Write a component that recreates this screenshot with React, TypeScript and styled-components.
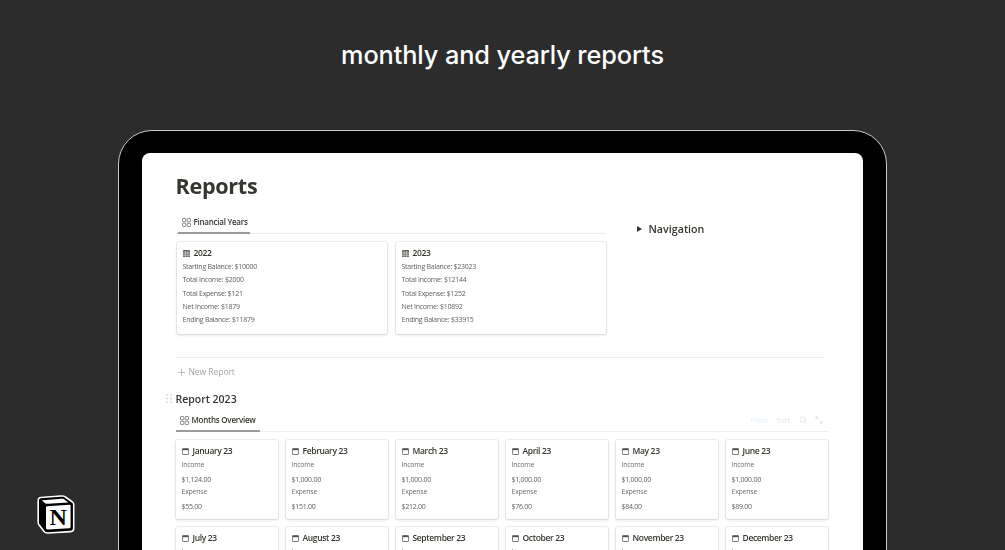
import React from "react";
import styled, { createGlobalStyle } from "styled-components";
import { Search } from "lucide-react";

const Global = createGlobalStyle`
  html, body { margin: 0; padding: 0; background: #2c2c2c; }
  body { width: 1005px; height: 550px; overflow: hidden; font-family: "Open Sans", "Liberation Sans", sans-serif; }
`;

const Stage = styled.div`
  position: relative;
  width: 1005px;
  height: 550px;
  overflow: hidden;
  background: #2c2c2c;
  display: flex;
  flex-direction: column;
  align-items: center;
`;

const Headline = styled.h1`
  margin: 37px 0 0;
  height: 36px;
  font: 500 25.3px/36px Inter, "Open Sans", sans-serif;
  color: #fff;
  letter-spacing: -0.1px;
  white-space: nowrap;
`;

const Device = styled.div`
  box-sizing: border-box;
  flex: none;
  width: 769px;
  height: 600px;
  margin-top: 57px;
  padding: 22px 23px 0 22.5px;
  background: #000;
  border: 1.5px solid #c9c9c9;
  border-radius: 34px;
`;

const Screen = styled.div`
  box-sizing: border-box;
  height: 100%;
  padding: 20px 35px 0 34px;
  background: #fff;
  border-radius: 8px;
  color: #37352f;
  filter: blur(0.35px);
`;

const PageTitle = styled.div`
  font: 700 21.6px/26px "Open Sans", sans-serif;
  letter-spacing: -0.3px;
  color: #37352f;
  height: 26px;
`;

const TopGrid = styled.div`
  display: flex;
  margin-top: 14px;
`;

const LeftCol = styled.div`
  width: 430px;
  flex: none;
`;

const Nav = styled.div`
  margin: 9px 0 0 31px;
  display: flex;
  align-items: center;
  height: 14px;
  gap: 7px;
  font: 600 10.7px/14px "Open Sans", sans-serif;
  color: #37352f;
`;

const Tri = styled.span`
  width: 0;
  height: 0;
  border-left: 5px solid #37352f;
  border-top: 3px solid transparent;
  border-bottom: 3px solid transparent;
`;

const TabBar = styled.div<{ $wide?: boolean }>`
  display: flex;
  align-items: center;
  justify-content: space-between;
  height: 21px;
  border-bottom: 1px solid #eeeeec;
  box-sizing: border-box;
  ${(p) => (p.$wide ? "width: 652px;" : "")}
`;

const Tab = styled.div<{ $w: number; $pad: number }>`
  box-sizing: border-box;
  width: ${(p) => p.$w}px;
  margin-left: ${(p) => p.$pad}px;
  height: 21px;
  margin-bottom: -1px;
  display: flex;
  align-items: center;
  gap: 3px;
  padding: 0 0 1px 4px;
  border-bottom: 2px solid #9b9a97;
  font: 600 8px/12px "Open Sans", sans-serif;
  letter-spacing: -0.25px;
  color: #37352f;
  white-space: nowrap;
`;

const YearCards = styled.div`
  display: flex;
  gap: 9px;
  margin: 8px 0 0 1px;
`;

const cardSkin = `
  box-sizing: border-box;
  background: #fff;
  border-radius: 2px;
  box-shadow: 0 0 0 1px rgba(15,15,15,.06), 0 1px 3px rgba(15,15,15,.14);
`;

const YearCard = styled.div`
  ${cardSkin}
  width: 210px;
  height: 92px;
  padding: 5px 6px 0;
`;

const CardTitle = styled.div`
  display: flex;
  align-items: center;
  gap: 4px;
  height: 12px;
  font: 600 8.5px/12px "Open Sans", sans-serif;
  letter-spacing: -0.35px;
  color: #37352f;
  white-space: nowrap;
`;

const YearLines = styled.div`
  margin-top: 1px;
`;

const Line = styled.div`
  font: 400 7px/13.3px "Open Sans", sans-serif;
  letter-spacing: -0.25px;
  color: #62615c;
  white-space: nowrap;
`;

const Divider = styled.div`
  height: 1px;
  margin-top: 23px;
  background: #eeeeec;
  width: 648px;
`;

const NewReport = styled.div`
  display: flex;
  align-items: center;
  gap: 4px;
  margin: 7px 0 0 2px;
  height: 14px;
  font: 400 8.6px/14px "Open Sans", sans-serif;
  letter-spacing: -0.1px;
  color: #a5a4a0;
`;

const SectionTitle = styled.div`
  position: relative;
  margin-top: 12px;
  height: 16px;
  font: 600 10.5px/16px "Open Sans", sans-serif;
  color: #37352f;
`;

const Handle = styled.svg`
  position: absolute;
  left: -10px;
  top: 3px;
`;

const Tools = styled.div`
  display: flex;
  align-items: center;
  gap: 8px;
  padding: 0 5px 2px 0;
  font: 400 7.5px/12px "Open Sans", sans-serif;
  color: #e6e6e4;
`;

const Filter = styled.span`
  color: #e3eef8;
`;

const MonthArea = styled.div`
  margin-top: 4px;
`;

const MonthGrid = styled.div`
  display: grid;
  grid-template-columns: repeat(6, 102.5px);
  column-gap: 7.5px;
  row-gap: 8px;
  margin-top: 8px;
`;

const MonthCard = styled.div`
  ${cardSkin}
  height: 79px;
  padding: 5px 6px 0;
`;

const MonthLines = styled.div`
  margin-top: 1.5px;
`;

const Label = styled.div`
  font: 400 7px/12px "Open Sans", sans-serif;
  letter-spacing: -0.25px;
  color: #72716c;
  margin-bottom: 3px;
`;

const Value = styled.div`
  font: 400 7px/12px "Open Sans", sans-serif;
  letter-spacing: -0.25px;
  color: #62615c;
`;

const Logo = styled.svg`
  position: absolute;
  left: 37px;
  top: 495px;
`;

const Gallery = () => (
  <svg width="9" height="9" viewBox="0 0 9 9" fill="none" stroke="#6f6e69" strokeWidth="0.8">
    <rect x="0.5" y="0.5" width="3.3" height="3.3" rx="0.6" />
    <rect x="5.2" y="0.5" width="3.3" height="3.3" rx="0.6" />
    <rect x="0.5" y="5.2" width="3.3" height="3.3" rx="0.6" />
    <rect x="5.2" y="5.2" width="3.3" height="3.3" rx="0.6" />
  </svg>
);

const TableIcon = () => (
  <svg width="7" height="7" viewBox="0 0 7 7">
    <rect width="7" height="7" rx="0.6" fill="#6a6964" />
    <path d="M0 2.2H7M0 3.8H7M0 5.4H7M2.3 1V7M4.7 1V7" stroke="#fff" strokeWidth="0.4" />
  </svg>
);

const CalIcon = () => (
  <svg width="7" height="7" viewBox="0 0 7 7" fill="none">
    <rect x="0.4" y="0.6" width="6.2" height="5.9" rx="0.7" stroke="#55534e" strokeWidth="0.8" />
    <rect x="0.4" y="0.6" width="6.2" height="1.6" fill="#55534e" />
  </svg>
);

const years = [
  { y: "2022", l: ["Starting Balance: $10000", "Total Income: $2000", "Total Expense: $121", "Net Income: $1879", "Ending Balance: $11879"] },
  { y: "2023", l: ["Starting Balance: $23023", "Total Income: $12144", "Total Expense: $1252", "Net Income: $10892", "Ending Balance: $33915"] },
];

const months = [
  ["January 23", "$1,124.00", "$55.00"],
  ["February 23", "$1,000.00", "$151.00"],
  ["March 23", "$1,000.00", "$212.00"],
  ["April 23", "$1,000.00", "$76.00"],
  ["May 23", "$1,000.00", "$84.00"],
  ["June 23", "$1,000.00", "$89.00"],
  ["July 23", "$1,000.00", "$0.00"],
  ["August 23", "$1,000.00", "$0.00"],
  ["September 23", "$1,000.00", "$0.00"],
  ["October 23", "$1,000.00", "$0.00"],
  ["November 23", "$1,000.00", "$0.00"],
  ["December 23", "$1,000.00", "$0.00"],
];

export default function App() {
  return (
    <Stage>
      <Global />
      <Headline>monthly and yearly reports</Headline>
      <Device>
        <Screen>
          <PageTitle>Reports</PageTitle>
          <TopGrid>
            <LeftCol>
              <TabBar>
                <Tab $w={72} $pad={2}><Gallery /> Financial Years</Tab>
              </TabBar>
              <YearCards>
                {years.map((c) => (
                  <YearCard key={c.y}>
                    <CardTitle><TableIcon /> {c.y}</CardTitle>
                    <YearLines>
                      {c.l.map((t) => <Line key={t}>{t}</Line>)}
                    </YearLines>
                  </YearCard>
                ))}
              </YearCards>
            </LeftCol>
            <Nav><Tri /> Navigation</Nav>
          </TopGrid>
          <Divider />
          <NewReport>
            <svg width="7" height="7" viewBox="0 0 7 7" stroke="#a5a4a0" strokeWidth="0.7"><path d="M3.5 0V7M0 3.5H7" /></svg>
            New Report
          </NewReport>
          <SectionTitle>
            <Handle width="6" height="9" viewBox="0 0 6 9" fill="#c4c4c1">
              <circle cx="1" cy="1" r="0.8" /><circle cx="5" cy="1" r="0.8" />
              <circle cx="1" cy="4.5" r="0.8" /><circle cx="5" cy="4.5" r="0.8" />
              <circle cx="1" cy="8" r="0.8" /><circle cx="5" cy="8" r="0.8" />
            </Handle>
            Report 2023
          </SectionTitle>
          <MonthArea>
            <TabBar $wide>
              <Tab $w={84} $pad={0}><Gallery /> Months Overview</Tab>
              <Tools>
                <Filter>Filter</Filter>
                <span>Sort</span>
                <Search size={8} color="#d9d9d7" strokeWidth={2} />
                <svg width="8" height="8" viewBox="0 0 8 8" fill="none" stroke="#d9d9d7" strokeWidth="0.9">
                  <path d="M1 1L3 3M1 1V3M1 1H3M7 7L5 5M7 7V5M7 7H5" />
                </svg>
              </Tools>
            </TabBar>
            <MonthGrid>
              {months.map(([name, inc, exp]) => (
                <MonthCard key={name}>
                  <CardTitle><CalIcon /> {name}</CardTitle>
                  <MonthLines>
                    <Label>Income</Label>
                    <Value>{inc}</Value>
                    <Label>Expense</Label>
                    <Value>{exp}</Value>
                  </MonthLines>
                </MonthCard>
              ))}
            </MonthGrid>
          </MonthArea>
        </Screen>
      </Device>
      <Logo width="38" height="39" viewBox="-5 -5 106 110" aria-label="Notion">
        <path d="M6.017 4.313l55.333-4.087c6.797-.583 8.543-.19 12.817 2.917l17.663 12.443c2.913 2.14 3.883 2.723 3.883 5.053v68.243c0 4.277-1.553 6.807-6.99 7.193L24.467 99.967c-4.08.193-6.023-.39-8.16-3.113L3.3 79.94C.967 76.827 0 74.497 0 71.773V11.113c0-3.497 1.553-6.413 6.017-6.8z" fill="#fff" stroke="#fff" strokeWidth="9" strokeLinejoin="round" />
        <path d="M61.35.227L6.017 4.314C1.553 4.7 0 7.617 0 11.113v60.66c0 2.723.967 5.053 3.3 8.167l13.007 16.913c2.137 2.723 4.08 3.307 8.16 3.113l64.257-3.89c5.433-.387 6.99-2.917 6.99-7.193V20.64c0-2.21-.873-2.847-3.443-4.733L74.167 3.143c-4.273-3.107-6.02-3.5-12.817-2.917zM25.92 19.523c-5.247.353-6.437.433-9.417-1.99L8.927 11.507c-.77-.78-.383-1.753 1.557-1.947l53.193-3.887c4.467-.39 6.793 1.167 8.54 2.527l9.123 6.61c.39.197 1.36 1.36.193 1.36l-54.933 3.307-.68.047zM19.803 88.3V30.367c0-2.53.777-3.697 3.103-3.893L86 22.78c2.14-.193 3.107 1.167 3.107 3.693v57.547c0 2.53-.39 4.67-3.883 4.863l-60.377 3.5c-3.493.193-5.043-.97-5.043-4.083z" fill="#000" fillRule="evenodd" />
        <text x="54" y="80" textAnchor="middle" fontFamily="'Liberation Serif', serif" fontWeight="700" fontSize="68" fill="#000">N</text>
      </Logo>
    </Stage>
  );
}
